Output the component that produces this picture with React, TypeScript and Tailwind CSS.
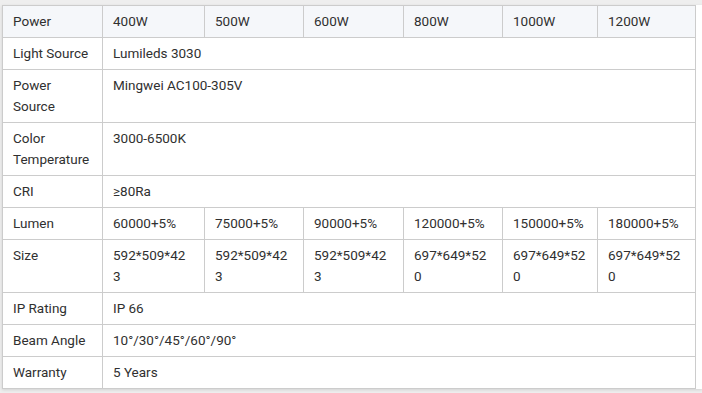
import React from "react";

const powers = ["400W", "500W", "600W", "800W", "1000W", "1200W"];
const lumens = ["60000+5%", "75000+5%", "90000+5%", "120000+5%", "150000+5%", "180000+5%"];
const sizes = ["592*509*423", "592*509*423", "592*509*423", "697*649*520", "697*649*520", "697*649*520"];

const rows: { label: string; value: string }[] = [
  { label: "IP Rating", value: "IP 66" },
  { label: "Beam Angle", value: "10°/30°/45°/60°/90°" },
  { label: "Warranty", value: "5 Years" },
];

const cell =
  "border border-[#cccccc] px-[10px] pt-[5px] pb-[5px] align-top leading-[21px] break-all";

const App: React.FC = () => {
  return (
    <div
      className="h-[393px] w-[702px] overflow-hidden bg-[#eeeeee] pt-[5px] pl-[2px] text-[13.5px] text-[#303030]"
      style={{ fontFamily: "Roboto, 'Liberation Sans', sans-serif" }}
    >
      <div className="w-[700px] bg-white shadow-[0_1px_3px_rgba(0,0,0,0.12)]">
        <table className="w-[693px] table-fixed border-collapse">
          <colgroup>
            <col className="w-[100px]" />
            <col className="w-[102px]" />
            <col className="w-[99px]" />
            <col className="w-[100px]" />
            <col className="w-[99px]" />
            <col className="w-[95px]" />
            <col className="w-[98px]" />
          </colgroup>
          <tbody>
            {/* en-tête */}
            <tr className="bg-[#f5f7fa]">
              <td className={cell}>Power</td>
              {powers.map((p) => (
                <td key={p} className={cell}>
                  {p}
                </td>
              ))}
            </tr>
            <tr>
              <td className={cell}>Light Source</td>
              <td className={cell} colSpan={6}>
                Lumileds 3030
              </td>
            </tr>
            <tr>
              <td className={cell}>
                Power
                <br />
                Source
              </td>
              <td className={cell} colSpan={6}>
                Mingwei AC100-305V
              </td>
            </tr>
            <tr>
              <td className={cell}>
                Color
                <br />
                Temperature
              </td>
              <td className={cell} colSpan={6}>
                3000-6500K
              </td>
            </tr>
            <tr>
              <td className={cell}>CRI</td>
              <td className={cell} colSpan={6}>
                ≥80Ra
              </td>
            </tr>
            <tr>
              <td className={cell}>Lumen</td>
              {lumens.map((l, i) => (
                <td key={i} className={cell}>
                  {l}
                </td>
              ))}
            </tr>
            <tr>
              <td className={cell}>Size</td>
              {sizes.map((s, i) => (
                <td key={i} className={cell}>
                  {s.slice(0, 10)}
                  <br />
                  {s.slice(10)}
                </td>
              ))}
            </tr>
            {rows.map((r) => (
              <tr key={r.label}>
                <td className={cell}>{r.label}</td>
                <td className={cell} colSpan={6}>
                  {r.value}
                </td>
              </tr>
            ))}
          </tbody>
        </table>
      </div>
    </div>
  );
};

export default App;
